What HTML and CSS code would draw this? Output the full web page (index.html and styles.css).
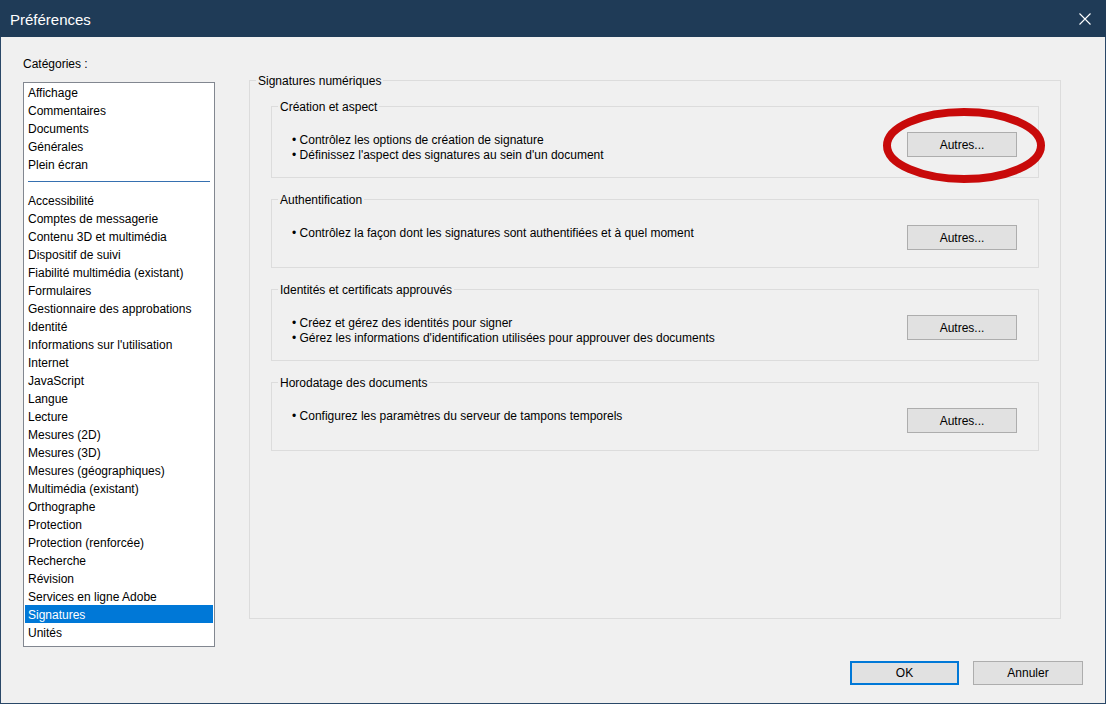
FILE: index.html
```html
<!DOCTYPE html>
<html lang="fr">
<head>
    <meta charset="UTF-8">
    <meta name="viewport" content="width=device-width, initial-scale=1.0">
    <title>Préférences</title>
    <link rel="stylesheet" href="styles.css">
</head>
<body>
    <div class="window">
        <div class="titlebar">
            <div class="title">Préférences</div>
            <div class="close">
                <svg width="12" height="12" viewBox="0 0 12 12">
                    <path d="M0.5 0.5 L11.5 11.5 M11.5 0.5 L0.5 11.5" stroke="#ffffff" stroke-width="1.1" fill="none"/>
                </svg>
            </div>
        </div>

        <div class="main">
            <div class="sidebar">
                <div class="label">Catégories :</div>
                <div class="list">
                    <div class="item">Affichage</div>
                    <div class="item">Commentaires</div>
                    <div class="item">Documents</div>
                    <div class="item">Générales</div>
                    <div class="item">Plein écran</div>
                    <div class="separator"></div>
                    <div class="item">Accessibilité</div>
                    <div class="item">Comptes de messagerie</div>
                    <div class="item">Contenu 3D et multimédia</div>
                    <div class="item">Dispositif de suivi</div>
                    <div class="item">Fiabilité multimédia (existant)</div>
                    <div class="item">Formulaires</div>
                    <div class="item">Gestionnaire des approbations</div>
                    <div class="item">Identité</div>
                    <div class="item">Informations sur l'utilisation</div>
                    <div class="item">Internet</div>
                    <div class="item">JavaScript</div>
                    <div class="item">Langue</div>
                    <div class="item">Lecture</div>
                    <div class="item">Mesures (2D)</div>
                    <div class="item">Mesures (3D)</div>
                    <div class="item">Mesures (géographiques)</div>
                    <div class="item">Multimédia (existant)</div>
                    <div class="item">Orthographe</div>
                    <div class="item">Protection</div>
                    <div class="item">Protection (renforcée)</div>
                    <div class="item">Recherche</div>
                    <div class="item">Révision</div>
                    <div class="item">Services en ligne Adobe</div>
                    <div class="item selected">Signatures</div>
                    <div class="item">Unités</div>
                </div>
            </div>

            <fieldset class="panel">
                <legend>Signatures numériques</legend>

                <fieldset class="group">
                    <legend>Création et aspect</legend>
                    <div class="row">
                        <div class="text">
                            <div>• Contrôlez les options de création de signature</div>
                            <div>• Définissez l'aspect des signatures au sein d'un document</div>
                        </div>
                        <div class="button">Autres...</div>
                    </div>
                </fieldset>

                <fieldset class="group">
                    <legend>Authentification</legend>
                    <div class="row">
                        <div class="text">
                            <div>• Contrôlez la façon dont les signatures sont authentifiées et à quel moment</div>
                        </div>
                        <div class="button">Autres...</div>
                    </div>
                </fieldset>

                <fieldset class="group">
                    <legend>Identités et certificats approuvés</legend>
                    <div class="row">
                        <div class="text">
                            <div>• Créez et gérez des identités pour signer</div>
                            <div>• Gérez les informations d'identification utilisées pour approuver des documents</div>
                        </div>
                        <div class="button">Autres...</div>
                    </div>
                </fieldset>

                <fieldset class="group">
                    <legend>Horodatage des documents</legend>
                    <div class="row">
                        <div class="text">
                            <div>• Configurez les paramètres du serveur de tampons temporels</div>
                        </div>
                        <div class="button">Autres...</div>
                    </div>
                </fieldset>
            </fieldset>
        </div>

        <div class="footer">
            <div class="button default">OK</div>
            <div class="button">Annuler</div>
        </div>

        <!-- red circle drawn over the first "Autres..." button -->
        <svg class="highlight" width="170" height="84" viewBox="0 0 170 84">
            <ellipse cx="85" cy="41.5" rx="77" ry="33.5" fill="none" stroke="#c80a0a" stroke-width="8"/>
        </svg>
    </div>
</body>
</html>
```

FILE: styles.css
```css
body {
    margin: 0;
    font-family: 'Liberation Sans', Arial, sans-serif;
    font-size: 12px;
    color: #000000;
    background-color: #f0f0f0;
}

.window {
    position: relative;
    width: 1106px;
    height: 704px;
    box-sizing: border-box;
    border: 1px solid #2a4868;
    border-top: none;
    background-color: #f0f0f0;
    display: flex;
    flex-direction: column;
}

.titlebar {
    height: 37px;
    flex-shrink: 0;
    background-color: #1f3b57;
    display: flex;
    align-items: center;
    justify-content: space-between;
    padding: 0 14px 0 10px;
    margin: 0 -1px;
}

.title {
    color: #ffffff;
    font-size: 15px;
    padding-top: 2px;
}

.close {
    width: 12px;
    height: 12px;
    margin-right: 1px;
    display: flex;
}

.main {
    display: flex;
    padding-left: 22px;
}

.sidebar {
    display: flex;
    flex-direction: column;
    padding-top: 19px;
}

.label {
    line-height: 16px;
    margin-bottom: 10px;
}

.list {
    width: 192px;
    height: 565px;
    box-sizing: border-box;
    border: 1px solid #828790;
    background-color: #ffffff;
    overflow: hidden;
}

.item {
    height: 18px;
    line-height: 20px;
    margin: 0 1px;
    padding-left: 3px;
    white-space: nowrap;
    overflow: hidden;
}

.item.selected {
    background-color: #0078d7;
    color: #ffffff;
}

.separator {
    height: 19px;
    display: flex;
    align-items: center;
    padding: 0 4px;
    margin-top: -1px;
}

.separator::before {
    content: '';
    flex: 1;
    height: 1px;
    background-color: #3670b0;
}

fieldset {
    margin: 0;
    padding: 0;
    min-width: 0;
    border: 1px solid #dcdcdc;
}

/* text sits 1px lower than the line box centre, as in the Windows font */
legend {
    padding: 2px 2px 0 2px;
    line-height: 13px;
}

.panel {
    width: 812px;
    height: 546px;
    box-sizing: border-box;
    margin-left: 34px;
    margin-top: 36px;
    padding: 11px 21px 0 21px;
    display: flex;
    flex-direction: column;
    gap: 14px;
}

.panel > legend {
    margin-left: -15px;
}

.group {
    padding: 17px 21px 14px 20px;
}

.group > legend {
    margin-left: -14px;
}

.row {
    display: flex;
    justify-content: space-between;
    align-items: flex-start;
}

.text {
    line-height: 15px;
    margin-top: 2px;
}

.button {
    width: 110px;
    height: 25px;
    box-sizing: border-box;
    border: 1px solid #adadad;
    background-color: #e1e1e1;
    display: flex;
    align-items: center;
    justify-content: center;
    margin: 1px 0 3px 0;
    cursor: pointer;
}

.footer {
    margin-top: auto;
    display: flex;
    justify-content: flex-end;
    gap: 14px;
    padding: 0 22px 18px 0;
}

.footer .button {
    height: 24px;
    margin: 0;
}

.button.default {
    width: 109px;
    border: 2px solid #0078d7;
}

.highlight {
    position: absolute;
    left: 878px;
    top: 104px;
}
```
